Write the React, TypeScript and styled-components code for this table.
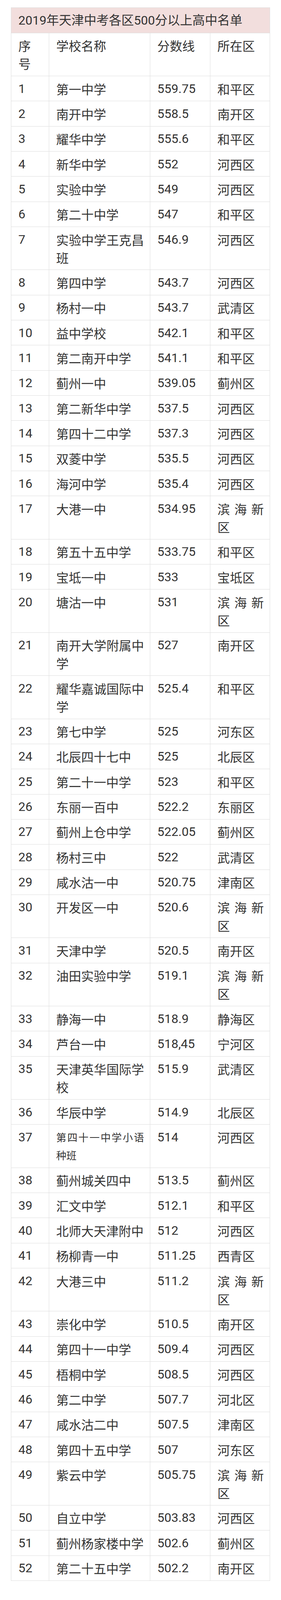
import React from 'react'
import styled, { createGlobalStyle } from 'styled-components'

type Row = [number, string, string, string]

const rows: Row[] = [
    [1, '第一中学', '559.75', '和平区'],
    [2, '南开中学', '558.5', '南开区'],
    [3, '耀华中学', '555.6', '和平区'],
    [4, '新华中学', '552', '河西区'],
    [5, '实验中学', '549', '河西区'],
    [6, '第二十中学', '547', '和平区'],
    [7, '实验中学王克昌班', '546.9', '河西区'],
    [8, '第四中学', '543.7', '河西区'],
    [9, '杨村一中', '543.7', '武清区'],
    [10, '益中学校', '542.1', '和平区'],
    [11, '第二南开中学', '541.1', '和平区'],
    [12, '蓟州一中', '539.05', '蓟州区'],
    [13, '第二新华中学', '537.5', '河西区'],
    [14, '第四十二中学', '537.3', '河西区'],
    [15, '双菱中学', '535.5', '河西区'],
    [16, '海河中学', '535.4', '河西区'],
    [17, '大港一中', '534.95', '滨海新区'],
    [18, '第五十五中学', '533.75', '和平区'],
    [19, '宝坻一中', '533', '宝坻区'],
    [20, '塘沽一中', '531', '滨海新区'],
    [21, '南开大学附属中学', '527', '南开区'],
    [22, '耀华嘉诚国际中学', '525.4', '和平区'],
    [23, '第七中学', '525', '河东区'],
    [24, '北辰四十七中', '525', '北辰区'],
    [25, '第二十一中学', '523', '和平区'],
    [26, '东丽一百中', '522.2', '东丽区'],
    [27, '蓟州上仓中学', '522.05', '蓟州区'],
    [28, '杨村三中', '522', '武清区'],
    [29, '咸水沽一中', '520.75', '津南区'],
    [30, '开发区一中', '520.6', '滨海新区'],
    [31, '天津中学', '520.5', '南开区'],
    [32, '油田实验中学', '519.1', '滨海新区'],
    [33, '静海一中', '518.9', '静海区'],
    [34, '芦台一中', '518,45', '宁河区'],
    [35, '天津英华国际学校', '515.9', '武清区'],
    [36, '华辰中学', '514.9', '北辰区'],
    [37, '第四十一中学小语种班', '514', '河西区'],
    [38, '蓟州城关四中', '513.5', '蓟州区'],
    [39, '汇文中学', '512.1', '和平区'],
    [40, '北师大天津附中', '512', '河西区'],
    [41, '杨柳青一中', '511.25', '西青区'],
    [42, '大港三中', '511.2', '滨海新区'],
    [43, '崇化中学', '510.5', '南开区'],
    [44, '第四十一中学', '509.4', '河西区'],
    [45, '梧桐中学', '508.5', '河西区'],
    [46, '第二中学', '507.7', '河北区'],
    [47, '咸水沽二中', '507.5', '津南区'],
    [48, '第四十五中学', '507', '河东区'],
    [49, '紫云中学', '505.75', '滨海新区'],
    [50, '自立中学', '503.83', '河西区'],
    [51, '蓟州杨家楼中学', '502.6', '蓟州区'],
    [52, '第二十五中学', '502.2', '南开区'],
]

// the one school name that was set in a smaller size in the source
const smallNames = [37]

const latin = 'Roboto, "Noto Sans CJK SC", sans-serif'
const cjk = '"Noto Sans CJK SC", sans-serif'

// the window is 4096 tall and the shot is stretched to 4267,
// so vertical sizes are taken as 0.96 of what the picture shows
const LINE = 46.08

const GlobalStyle = createGlobalStyle`
    html, body {
        margin: 0;
        padding: 0;
        background: #fff;
    }
    body {
        font-family: ${latin};
        color: #333;
    }
`

const Page = styled.div`
    width: 720px;
    padding: 19.2px 0 40px;
    box-sizing: border-box;
`

const Table = styled.table`
    width: 663px;
    margin: 0 auto;
    border-collapse: collapse;
    table-layout: fixed;
    font-size: 32px;
    line-height: ${LINE}px;
`

const Col = styled.col<{ $w: number }>`
    width: ${p => p.$w}px;
`

const TitleCell = styled.td`
    background: #f2dedd;
    border: 1px solid #dedede;
    padding: 8.64px 16px 8.64px 18px;
`

// digits and cjk mixed on one line grow the line box, so pin it
const TitleText = styled.div`
    height: ${LINE}px;
    white-space: nowrap;
`

// one font per cell keeps every line at exactly LINE px
const Cell = styled.td<{ $cjk?: boolean; $small?: boolean }>`
    border: 1px solid #dedede;
    padding: 8.64px 15px 8.64px 18px;
    vertical-align: top;
    text-align: justify;
    word-break: break-all;
    font-family: ${p => (p.$cjk ? cjk : latin)};
    font-size: ${p => (p.$small ? '26px' : '32px')};
`

const App: React.FC = () => {
    return (
        <>
            <GlobalStyle />
            <Page>
                <Table>
                    <colgroup>
                        <Col $w={97} />
                        <Col $w={259} />
                        <Col $w={154} />
                        <Col $w={153} />
                    </colgroup>
                    <tbody>
                        <tr>
                            <TitleCell colSpan={4}>
                                <TitleText>2019年天津中考各区500分以上高中名单</TitleText>
                            </TitleCell>
                        </tr>
                        <tr>
                            <Cell $cjk>序号</Cell>
                            <Cell $cjk>学校名称</Cell>
                            <Cell $cjk>分数线</Cell>
                            <Cell $cjk>所在区</Cell>
                        </tr>
                        {rows.map(([no, name, score, area]) => (
                            <tr key={no}>
                                <Cell>{no}</Cell>
                                <Cell $cjk $small={smallNames.includes(no)}>{name}</Cell>
                                <Cell>{score}</Cell>
                                <Cell $cjk>{area}</Cell>
                            </tr>
                        ))}
                    </tbody>
                </Table>
            </Page>
        </>
    )
}

export default App
